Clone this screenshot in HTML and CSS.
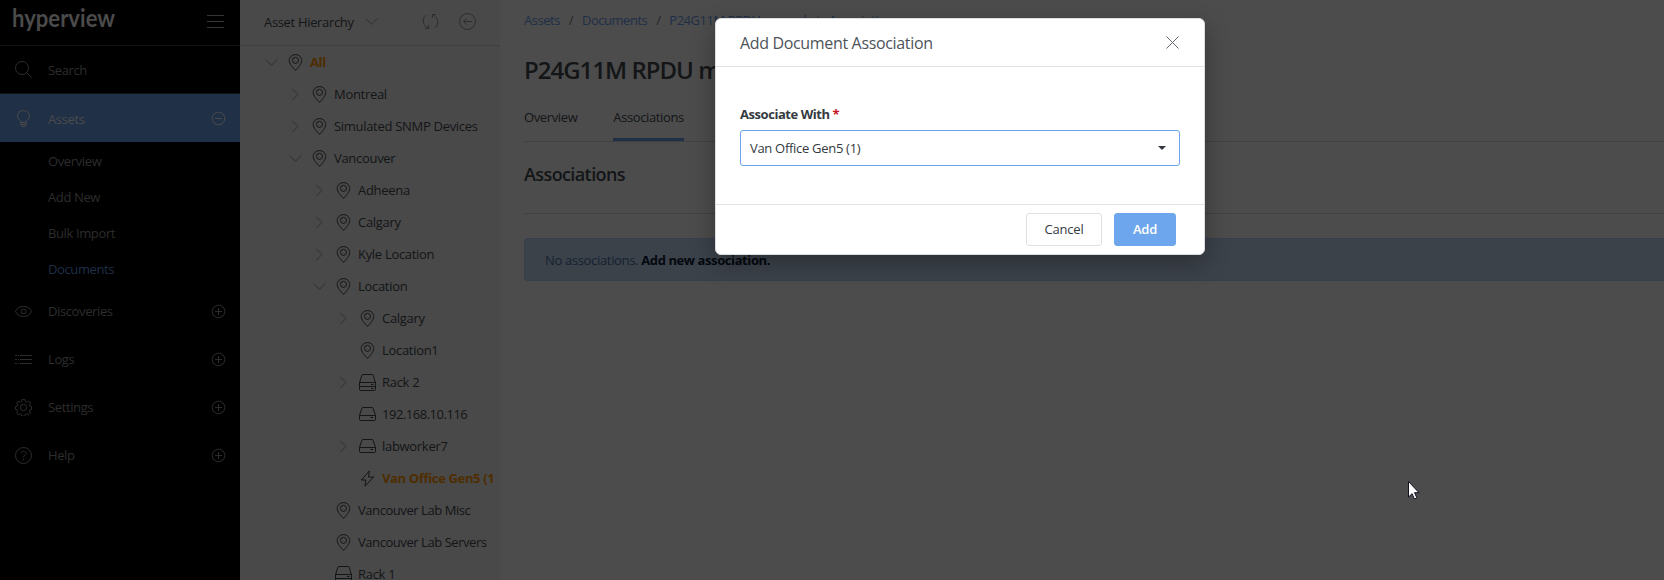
FILE: index.html
```html
<!DOCTYPE html>
<html lang="en">
<head>
<meta charset="utf-8">
<title>Hyperview - Documents</title>
<link rel="stylesheet" href="styles.css">
</head>
<body>
<svg class="sprite" aria-hidden="true">
  <symbol id="pin" viewBox="0 0 17 17"><path d="M8.500 .6C4.900.6 2.300 3.200 2.300 6.600c0 3.500 3 6.200 6.200 9.900 3.200-3.700 6.200-6.400 6.200-9.900C14.700 3.200 12.100.6 8.500.6z"/><circle cx="8.500" cy="6.400" r="3"/></symbol>
  <symbol id="down" viewBox="0 0 17 17"><path d="M2.700 5.500l5.800 5.800 5.800-5.800"/></symbol>
  <symbol id="right" viewBox="0 0 17 17"><path d="M5.200 2.700l5.800 5.800-5.800 5.800"/></symbol>
  <symbol id="server" viewBox="0 0 17 17"><path d="M.5 9.500L2.800 2.500Q3 1.500 4 1.500h9q1 0 1.200 1L16.500 9.500v4q0 1-1 1h-14q-1 0-1-1zM.5 9.500h16M11.500 11.500h2.500"/></symbol>
  <symbol id="rack" viewBox="0 0 17 17"><path d="M.5 8.500L2.800 1.500Q3 .5 4 .5h9q1 0 1.200 1L16.500 8.500v7q0 1-1 1h-14q-1 0-1-1zM.5 8.500h16M.5 12.500h16M12 10.500h2.500M12 14.500h2.500"/></symbol>
  <symbol id="bolt" viewBox="0 0 17 17"><path d="M10.400.9L2.300 10h4.600l-.9 6.200L14.700 7H9.500z"/></symbol>
  <symbol id="plus" viewBox="0 0 17 17"><circle cx="8.500" cy="8.500" r="6.300"/><path d="M5 8.500h7M8.500 5v7"/></symbol>
  <symbol id="minus" viewBox="0 0 17 17"><circle cx="8.500" cy="8.500" r="6.300"/><path d="M5 8.500h7"/></symbol>
  <symbol id="search" viewBox="0 0 17 17"><circle cx="7" cy="7" r="6.500"/><path d="M11.600 11.600l5 5"/></symbol>
  <symbol id="bulb" viewBox="0 0 17 17"><path d="M6 12.500C6 9.500 2.500 9.500 2.500 5.900 2.500 2.700 5.200.6 8.500.6s6 2.100 6 5.300c0 3.600-3.500 3.600-3.500 6.600zM6 12.500v2.700l1 1.200h3l1-1.200v-2.700M6 14.400h5"/></symbol>
  <symbol id="eye" viewBox="0 0 17 17"><path d="M.5 8.500C3.500 1.700 13.500 1.700 16.500 8.500 13.500 15.300 3.500 15.300.5 8.500z"/><circle cx="8.500" cy="8.500" r="2.400"/></symbol>
  <symbol id="list" viewBox="0 0 17 17"><path d="M0 4.500h2M3 4.500h1M5 4.500h12M0 8.500h2M3 8.500h1M5 8.500h12M0 12.500h2M3 12.500h1M5 12.500h12"/></symbol>
  <symbol id="gear" viewBox="0 0 17 17"><path d="M7 .6h3l.4 2 1.400.6 1.700-1.100 2 2-1.100 1.700.6 1.400 1.600.3v2.900l-1.700.4-.6 1.400 1.100 1.700-2 2-1.700-1.100-1.400.6-.4 1.700H7l-.4-1.700-1.400-.6-1.700 1.100-2-2 1.100-1.700-.6-1.400-1.600-.4V7.500L2.100 7.200l.6-1.400L1.600 4.100l2-2 1.700 1.100 1.400-.6z"/><circle cx="8.500" cy="8.500" r="3.200"/></symbol>
  <symbol id="help" viewBox="0 0 17 17"><circle cx="8.500" cy="8.500" r="8"/><path d="M6.200 6.300C6.400 3.500 11 3.600 11 6.300c0 1.900-2.500 1.800-2.500 4.200M8.500 11.900v1.300"/></symbol>
  <symbol id="refresh" viewBox="0 0 17 17"><path d="M3.900 2.200C-.2 5.600.3 12.200 5.900 15.100M6.600 11.900v3.600H3M13.100 14.800C17.200 11.400 16.700 4.800 11.100 1.900M10.400 5.100V1.500H14"/></symbol>
  <symbol id="back" viewBox="0 0 17 17"><circle cx="8.500" cy="8.500" r="8"/><path d="M4.500 8.500h8.500M7.500 5.500l-3 3 3 3"/></symbol>
</svg>

<div class="app">
  <nav class="sidebar">
    <div class="brand">
      <svg class="logo" viewBox="0 0 106 32"><text x="0" y="20" textLength="103" lengthAdjust="spacingAndGlyphs">hyperview</text></svg>
      <svg class="burger" viewBox="0 0 17 14"><path d="M0 1.500h17M0 7.500h17M0 13.500h17"/></svg>
    </div>
    <div class="nav-row search"><svg class="ico"><use href="#search"/></svg><span>Search</span></div>
    <div class="nav-row active"><svg class="ico"><use href="#bulb"/></svg><span>Assets</span><svg class="ico"><use href="#minus"/></svg></div>
    <div class="subnav">
      <a>Overview</a><a>Add New</a><a>Bulk Import</a><a class="current">Documents</a>
    </div>
    <div class="nav-row"><svg class="ico"><use href="#eye"/></svg><span>Discoveries</span><svg class="ico"><use href="#plus"/></svg></div>
    <div class="nav-row"><svg class="ico"><use href="#list"/></svg><span>Logs</span><svg class="ico"><use href="#plus"/></svg></div>
    <div class="nav-row"><svg class="ico"><use href="#gear"/></svg><span>Settings</span><svg class="ico"><use href="#plus"/></svg></div>
    <div class="nav-row"><svg class="ico"><use href="#help"/></svg><span>Help</span><svg class="ico"><use href="#plus"/></svg></div>
  </nav>

  <aside class="tree">
    <div class="tree-head"><span>Asset Hierarchy</span><svg class="ico chev"><use href="#down"/></svg><svg class="ico tool refresh"><use href="#refresh"/></svg><svg class="ico tool"><use href="#back"/></svg></div>
    <div class="node l0 hot"><svg class="ico chev"><use href="#down"/></svg><svg class="ico"><use href="#pin"/></svg><span>All</span></div>
    <div class="node l1"><svg class="ico chev"><use href="#right"/></svg><svg class="ico"><use href="#pin"/></svg><span>Montreal</span></div>
    <div class="node l1"><svg class="ico chev"><use href="#right"/></svg><svg class="ico"><use href="#pin"/></svg><span>Simulated SNMP Devices</span></div>
    <div class="node l1"><svg class="ico chev"><use href="#down"/></svg><svg class="ico"><use href="#pin"/></svg><span>Vancouver</span></div>
    <div class="node l2"><svg class="ico chev"><use href="#right"/></svg><svg class="ico"><use href="#pin"/></svg><span>Adheena</span></div>
    <div class="node l2"><svg class="ico chev"><use href="#right"/></svg><svg class="ico"><use href="#pin"/></svg><span>Calgary</span></div>
    <div class="node l2"><svg class="ico chev"><use href="#right"/></svg><svg class="ico"><use href="#pin"/></svg><span>Kyle Location</span></div>
    <div class="node l2"><svg class="ico chev"><use href="#down"/></svg><svg class="ico"><use href="#pin"/></svg><span>Location</span></div>
    <div class="node l3"><svg class="ico chev"><use href="#right"/></svg><svg class="ico"><use href="#pin"/></svg><span>Calgary</span></div>
    <div class="node l3"><svg class="ico chev"></svg><svg class="ico"><use href="#pin"/></svg><span>Location1</span></div>
    <div class="node l3"><svg class="ico chev"><use href="#right"/></svg><svg class="ico"><use href="#rack"/></svg><span>Rack 2</span></div>
    <div class="node l3"><svg class="ico chev"></svg><svg class="ico"><use href="#server"/></svg><span class="ip">192.168.10.116</span></div>
    <div class="node l3"><svg class="ico chev"><use href="#right"/></svg><svg class="ico"><use href="#server"/></svg><span>labworker7</span></div>
    <div class="node l3 hot"><svg class="ico chev"></svg><svg class="ico"><use href="#bolt"/></svg><span>Van Office Gen5 (1</span></div>
    <div class="node l2 long"><svg class="ico chev"></svg><svg class="ico"><use href="#pin"/></svg><span>Vancouver Lab Misc</span></div>
    <div class="node l2 long"><svg class="ico chev"></svg><svg class="ico"><use href="#pin"/></svg><span>Vancouver Lab Servers</span></div>
    <div class="node l2"><svg class="ico chev"></svg><svg class="ico"><use href="#rack"/></svg><span>Rack 1</span></div>
  </aside>

  <main class="main">
    <div class="crumbs"><a>Assets</a><i>/</i><a>Documents</a><i>/</i><a>P24G11M RPDU manual etc Association</a></div>
    <h1>P24G11M RPDU manual</h1>
    <div class="tabs"><a>Overview</a><a class="selected">Associations</a></div>
    <h2>Associations</h2>
    <div class="alert">No associations. <b>Add new association.</b></div>
  </main>
</div>

<div class="modal" role="dialog">
  <div class="modal-head"><span>Add Document Association</span><svg class="close" viewBox="0 0 13 13"><path d="M.5.5l12 12M12.500.5l-12 12"/></svg></div>
  <div class="modal-body">
    <label>Associate With <em>*</em></label>
    <div class="select"><span>Van Office Gen5 (1)</span><svg class="caret" viewBox="0 0 8 4"><path d="M0 0h8L4 4z"/></svg></div>
  </div>
  <div class="modal-foot"><button class="btn">Cancel</button><button class="btn primary">Add</button></div>
</div>

<svg class="cursor" viewBox="0 0 13 20"><path d="M1.500 1.500v15.500l3.600-3.300 2.300 5.300 2.500-1.100-2.400-5.200H12z"/></svg>
</body>
</html>
```
FILE: styles.css
```css
* { box-sizing: border-box; }
body {
  margin: 0;
  width: 1664px;
  height: 580px;
  overflow: hidden;
  background: #4c4c4c;
  color: #131517;
  font: 13px/20px "Open Sans", "Noto Sans", sans-serif;
  letter-spacing: -0.38px;
}
.sprite { display: none; }
.app { display: flex; height: 580px; }
svg { fill: none; stroke: currentColor; stroke-width: 1; flex: none; }
.ico { width: 17px; height: 17px; }

.sidebar { width: 240px; background: #000; color: #2d2d2d; flex: none; }
.brand {
  height: 46px;
  padding: 0 16px 0 12px;
  border-bottom: 1px solid #131313;
  display: flex;
  justify-content: space-between;
}
.logo { width: 106px; height: 32px; margin-top: 7px; overflow: visible; }
.logo text { font: 700 24px/30px "Lato", sans-serif; letter-spacing: 0; fill: #4b4b4b; stroke: none; }
.burger { width: 17px; height: 14px; margin-top: 14px; color: #353535; }
.nav-row { height: 48px; padding: 0 13px 0 15px; display: flex; align-items: center; }
.nav-row span { flex: 1; margin-left: 16px; }
.nav-row.search { border-bottom: 1px solid #131313; }
.nav-row.active { background: #203047; color: #4b4b4b; font-weight: 500; }
.nav-row.active span { padding-top: 2px; }
.subnav { padding-top: 1px; }
.subnav a { display: block; height: 36px; padding-left: 48px; line-height: 37px; }
.subnav .current { color: #1f2f48; }

.tree { width: 260px; height: 580px; background: #494949; overflow: hidden; flex: none; }
.tree-head {
  height: 46px;
  padding: 0 24px;
  border-bottom: 1px solid #404040;
  display: flex;
  align-items: center;
  letter-spacing: -0.33px;
}
.tree-head span { margin-top: -2px; }
.tree-head .chev { margin: -2px 0 0 9px; }
.tree-head .tool { color: #2b2d30; margin-left: 20px; margin-top: -2px; }
.tree-head .refresh { margin-left: auto; }
.node { height: 32px; display: flex; align-items: center; white-space: nowrap; color: #131517; letter-spacing: -0.3px; }
.node .ico + .ico { margin-left: 7px; }
.node span { margin-left: 6px; }
.node .ip { letter-spacing: -0.48px; }
.node.long { letter-spacing: -0.44px; }
.node .chev, .tree-head .chev { color: #2c2f32; }
.l0 { padding-left: 23px; }
.l1 { padding-left: 47px; }
.l2 { padding-left: 71px; }
.l3 { padding-left: 95px; }
.hot span { color: #4f2d00; font-weight: 700; letter-spacing: -0.35px; }

.main { width: 1188px; padding-left: 24px; flex: none; }
.crumbs { display: flex; margin-top: 10px; color: #1f2f48; white-space: nowrap; letter-spacing: -0.47px; }
.crumbs i { font-style: normal; width: 22px; text-align: center; color: #242628; }
h1 { margin: 22px 0 0; font-size: 24px; line-height: 36px; font-weight: 600; letter-spacing: -1px; }
.tabs { display: flex; gap: 36px; height: 54px; border-bottom: 1px solid #414141; }
.tabs a { height: 53px; padding-top: 19px; }
.tabs .selected { border-bottom: 3px solid #203047; }
h2 { margin: 0; height: 72px; padding-top: 18px; border-bottom: 1px solid #414141; font-size: 18px; line-height: 28px; font-weight: 600; letter-spacing: -0.6px; }
.alert { margin-top: 24px; height: 43px; padding: 0 20px; line-height: 43px; background: #3c424a; border: 1px solid #36404b; border-radius: 3px; color: #142131; letter-spacing: -0.33px; }
.alert b { color: #03080f; letter-spacing: -0.4px; }

.modal {
  position: absolute;
  left: 715px;
  top: 18px;
  width: 490px;
  height: 237px;
  background: #fff;
  border: 1px solid #dcdddf;
  border-radius: 6px;
  box-shadow: 0 8px 24px rgba(0, 0, 0, .3);
  color: #343a40;
}
.modal-head { height: 48px; padding: 0 25px 0 24px; border-bottom: 1px solid #e1e2e4; display: flex; align-items: center; justify-content: space-between; font-size: 16px; letter-spacing: -0.34px; color: #4d5359; }
.modal-head span { padding-top: 1px; }
.close { width: 13px; height: 13px; color: #63676b; }
.modal-body { height: 138px; padding: 37px 24px 0; border-bottom: 1px solid #e1e2e4; }
label { display: block; font-weight: 700; height: 26px; letter-spacing: -0.45px; }
em { font-style: normal; color: #c3161c; }
.select { height: 36px; padding: 0 13px 0 9px; border: 1px solid #68a3eb; border-radius: 3px; display: flex; align-items: center; justify-content: space-between; letter-spacing: -0.3px; }
.caret { width: 8px; height: 4px; fill: #32373d; stroke: none; }
.modal-foot { padding: 8px 28px 0; display: flex; justify-content: flex-end; gap: 12px; }
.btn { height: 33px; width: 76px; padding: 0 0 2px; border: 1px solid #dfe0e2; border-radius: 3px; background: #fff; color: #343a40; font: inherit; letter-spacing: -0.2px; }
.btn.primary { width: 62px; border-color: #6da6ec; background: #6da6ec; color: #fff; font-weight: 600; }

.cursor { position: absolute; left: 1407px; top: 480px; width: 13px; height: 20px; fill: #fff; stroke: #12131f; }
```
